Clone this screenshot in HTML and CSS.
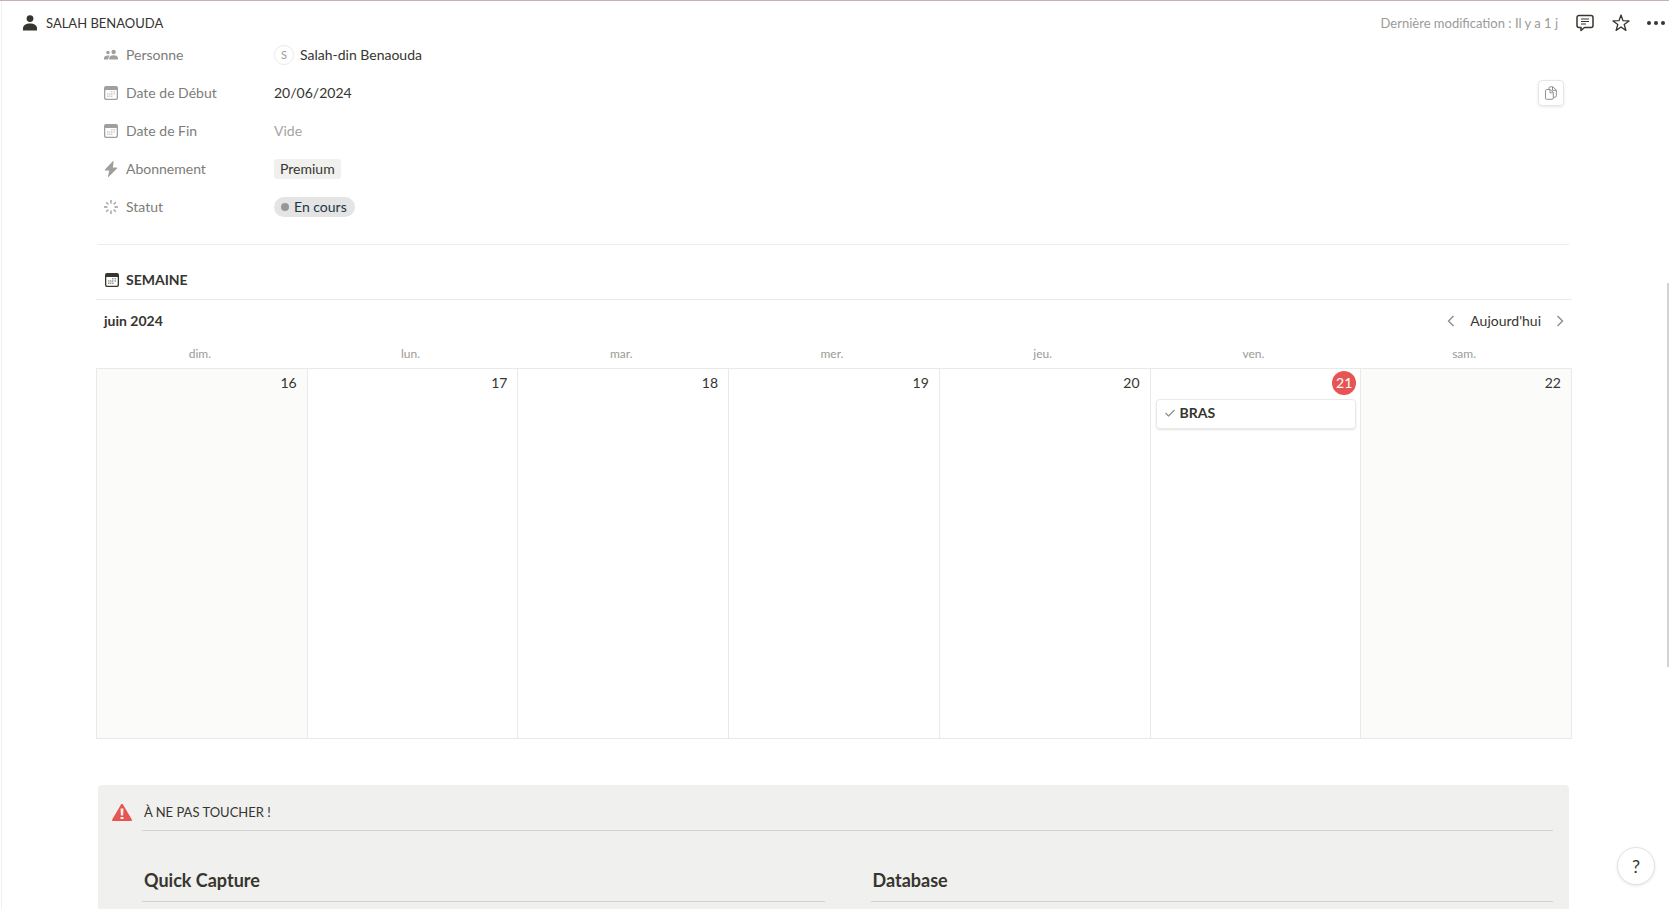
FILE: index.html
```
<!DOCTYPE html>
<html lang="fr">
  <head>
    <meta charset="utf-8" />
    <title>SALAH BENAOUDA</title>
    <link rel="stylesheet" href="styles.css">
  </head>
  <body>
    <!-- Shared icons -->
    <svg class="sprite" aria-hidden="true">
      <symbol id="icon-calendar" viewBox="0 0 14 14">
        <path fill-rule="evenodd" d="M2 0h10a2 2 0 0 1 2 2v10a2 2 0 0 1-2 2H2a2 2 0 0 1-2-2V2a2 2 0 0 1 2-2zM1.300 4v7.500a1.200 1.200 0 0 0 1.200 1.200h9a1.200 1.200 0 0 0 1.200-1.200V4z" />
        <path opacity=".5" d="M7 5h1.500v1.500H7zM9.500 5H11v1.500H9.500zM3 7.300h1.500v1.500H3zM5 7.300h1.500v1.500H5zM7 7.300h1.500v1.500H7zM9.500 7.300H11v1.500H9.500zM3 9.600h1.500v1.500H3zM5 9.600h1.500v1.500H5zM7 9.600h1.500v1.500H7z" />
      </symbol>
    </svg>

    <header class="topbar">
      <a href="#" class="page-title">
        <svg width="14" height="16" viewBox="0 0 14 16"><circle cx="7" cy="3.600" r="3.400" /><path d="M0 15.500v-2.200C0 10.500 3 8.500 7 8.500s7 2 7 4.800v2.200z" /></svg>
        SALAH BENAOUDA
      </a>
      <span class="edited">Dernière modification : Il y a 1 j</span>
      <button class="icon-button" aria-label="Commentaires">
        <svg width="18" height="18" viewBox="0 0 18 18" class="stroke"><path d="M3 1.500h12a2 2 0 0 1 2 2v8a2 2 0 0 1-2 2H8.500L5 16.500v-3H3a2 2 0 0 1-2-2v-8a2 2 0 0 1 2-2z" /><path d="M5 5h8M5 7.500h8M5 10h5" stroke-width="1" /></svg>
      </button>
      <button class="icon-button" aria-label="Favoris">
        <svg width="18" height="18" viewBox="0 0 18 18" class="stroke"><path stroke-width="1.300" d="M9 1l2 5.700 6 .2-4.800 3.600 1.700 5.900L9 13l-4.900 3.400 1.700-5.900L1 6.900l6-.2z" /></svg>
      </button>
      <button class="icon-button" aria-label="Plus">
        <svg width="18" height="18" viewBox="0 0 18 18"><circle cx="2" cy="9" r="2" /><circle cx="9" cy="9" r="2" /><circle cx="16" cy="9" r="2" /></svg>
      </button>
    </header>

    <main>
      <!-- Properties -->
      <dl class="properties">
        <div class="property">
          <dt><svg width="16" height="14" viewBox="0 0 16 14"><circle cx="4.500" cy="4" r="2" /><circle cx="11" cy="3.500" r="2.500" /><path d="M0 12V10.500C0 8.500 2 7.500 4.500 7.500c.8 0 1.500.1 2.100.4C5.500 8.800 5 9.800 5 11v1zM6 12v-1.500c0-2 2-3.300 5-3.300s5 1.300 5 3.300V12z" /></svg>Personne</dt>
          <dd><span class="avatar">S</span>Salah-din Benaouda</dd>
        </div>
        <div class="property">
          <dt><svg width="14" height="14"><use href="#icon-calendar" /></svg>Date de Début</dt>
          <dd>20/06/2024</dd>
          <button class="copy-button" aria-label="Copier">
            <svg width="12" height="14" viewBox="0 0 12 14" class="stroke"><path stroke-width="1" d="M4 3.500V2a1.200 1.200 0 0 1 1.200-1.200h2.600L11.300 4v6a1.200 1.200 0 0 1-1.200 1.200H8.500M7.500.8v3.500h3.800M1.700 3.500h3.600l3 3v5.600a1.200 1.200 0 0 1-1.200 1.200H1.700A1.200 1.200 0 0 1 .5 12.100V4.700a1.200 1.200 0 0 1 1.200-1.200zM5 3.800v3h3" /></svg>
          </button>
        </div>
        <div class="property">
          <dt><svg width="14" height="14"><use href="#icon-calendar" /></svg>Date de Fin</dt>
          <dd class="empty">Vide</dd>
        </div>
        <div class="property">
          <dt><svg width="14" height="16" viewBox="0 0 14 16"><path d="M8.500.5L1 8.500c-.5.600-.3 1 .4 1h3.800L4 15.500c-.1.600.4.700.8.300L13 7.500c.4-.5.200-1-.5-1H8.800l.8-5.300c.1-.8-.6-1.200-1.100-.7z" /></svg>Abonnement</dt>
          <dd><span class="tag">Premium</span></dd>
        </div>
        <div class="property">
          <dt><svg width="16" height="16" viewBox="0 0 16 16" class="stroke"><path stroke-width="1.600" d="M8 0v4M8 12v4M0 8h4M12 8h4M2.500 2.500l2.500 2.500M11 11l2.500 2.500M13.500 2.500L11 5M5 11l-2.500 2.500" /></svg>Statut</dt>
          <dd><span class="status">En cours</span></dd>
        </div>
      </dl>

      <!-- Week calendar -->
      <section class="calendar">
        <h2><svg width="14" height="14"><use href="#icon-calendar" /></svg>SEMAINE</h2>
        <div class="calendar-bar">
          <h3>juin 2024</h3>
          <button class="nav-button" aria-label="Semaine précédente"><svg width="8" height="12" viewBox="0 0 8 12" class="stroke"><path d="M6.500 1L1.500 6l5 5" /></svg></button>
          <button class="today-button">Aujourd'hui</button>
          <button class="nav-button" aria-label="Semaine suivante"><svg width="8" height="12" viewBox="0 0 8 12" class="stroke"><path d="M1.500 1l5 5-5 5" /></svg></button>
        </div>
        <table>
          <thead>
            <tr><th>dim.</th><th>lun.</th><th>mar.</th><th>mer.</th><th>jeu.</th><th>ven.</th><th>sam.</th></tr>
          </thead>
          <tbody>
            <tr>
              <td class="weekend"><span class="day">16</span></td>
              <td><span class="day">17</span></td>
              <td><span class="day">18</span></td>
              <td><span class="day">19</span></td>
              <td><span class="day">20</span></td>
              <td>
                <span class="day today">21</span>
                <a href="#" class="event"><svg width="10" height="8" viewBox="0 0 10 8" class="stroke"><path stroke-width="1.200" d="M.5 4L3.500 7l6-6" /></svg>BRAS</a>
              </td>
              <td class="weekend"><span class="day">22</span></td>
            </tr>
          </tbody>
        </table>
      </section>

      <!-- Callout -->
      <section class="callout">
        <svg class="warning" width="20" height="17" viewBox="0 0 20 17"><path fill="#e65553" d="M9 .6a1.200 1.200 0 0 1 2 0l8.800 15c.4.700 0 1.400-.9 1.400H1.100c-.9 0-1.300-.7-.9-1.400z" /><path fill="#f0f0ee" d="M8.500 4.500h3l-.4 7H8.900zM8.500 13h3v2h-3z" /></svg>
        <div class="callout-body">
          <p>À NE PAS TOUCHER !</p>
          <div class="columns">
            <h3>Quick Capture</h3>
            <h3>Database</h3>
          </div>
        </div>
      </section>
    </main>

    <button class="help">?</button>
    <div class="scroll-thumb"></div>
  </body>
</html>
```
FILE: styles.css
```
* {
  box-sizing: border-box;
}

body {
  margin: 0;
  padding-left: 1px;
  height: 100vh;
  overflow: hidden;
  border-top: 1px solid #c9b1b0;
  background: #fff;
  color: #37352f;
  font-family: Lato, "Liberation Sans", sans-serif;
  font-size: 14px;
  line-height: 20px;
}

h2,
h3,
p,
dl,
dd {
  margin: 0;
}

a {
  color: inherit;
  text-decoration: none;
}

button {
  display: flex;
  align-items: center;
  justify-content: center;
  padding: 0;
  border: none;
  background: none;
  color: inherit;
  font: inherit;
  cursor: pointer;
}

svg {
  flex: none;
  fill: currentColor;
}

.stroke {
  fill: none;
  stroke: currentColor;
  stroke-width: 1.500;
  stroke-linejoin: round;
}

.sprite {
  display: none;
}

.topbar {
  display: flex;
  align-items: center;
  height: 37px;
  padding: 7px 4px 0 21px;
  border-left: 1px solid #f0f0ef;
  font-size: 13px;
}

.page-title {
  display: flex;
  align-items: center;
  gap: 9px;
  margin-right: auto;
}

.edited {
  margin-right: 9px;
  color: #9b9a97;
}

.icon-button {
  width: 36px;
  height: 28px;
}

.icon-button:last-child {
  width: 26px;
  justify-content: flex-end;
}

main {
  min-height: 100%;
  padding: 0 97px 0 94px;
  border-left: 1px solid #f0f0ef;
}

.properties {
  display: flex;
  flex-direction: column;
  gap: 4px;
  padding: 0 5px 20px 6px;
  margin: 0 3px 0 2px;
  border-bottom: 1px solid #ececeb;
}

.property {
  display: flex;
  align-items: center;
  height: 34px;
}

.property dt {
  display: flex;
  align-items: center;
  gap: 8px;
  width: 170px;
  padding-bottom: 1px;
  color: #7d7c78;
}

.property dt svg {
  width: 14px;
  color: #a09f9c;
}

.property dd {
  display: flex;
  align-items: center;
  flex: 1;
}

.property .empty {
  color: #a5a4a1;
}

.avatar {
  width: 20px;
  height: 20px;
  margin-right: 6px;
  border: 1px solid #e9e9e8;
  border-radius: 50%;
  color: #9b9a97;
  font-size: 11px;
  line-height: 18px;
  text-align: center;
}

.copy-button {
  width: 26px;
  height: 26px;
  border: 1px solid #e6e6e5;
  border-radius: 4px;
  box-shadow: 0 1px 3px #0000001a;
  color: #91908c;
}

.tag {
  padding: 0 6px;
  border-radius: 3px;
  background: #f0f0ee;
}

.status {
  display: flex;
  align-items: center;
  gap: 5px;
  padding: 0 8px 0 7px;
  border-radius: 10px;
  background: #e3e4e3;
  color: #1c3448;
}

.status::before {
  content: "";
  width: 8px;
  height: 8px;
  border-radius: 50%;
  background: #979795;
}

.calendar h2 {
  display: flex;
  align-items: center;
  gap: 7px;
  height: 55px;
  padding: 16px 9px 0;
  border-bottom: 1px solid #e9e9e8;
  font-size: 14px;
}

.calendar-bar {
  display: flex;
  align-items: center;
  height: 42px;
  padding-left: 8px;
}

.calendar-bar h3 {
  margin-right: auto;
  font-size: 14px;
}

.nav-button {
  width: 24px;
  height: 24px;
  color: #91908c;
}

.today-button {
  padding: 0 7px;
}

.calendar table {
  width: 100%;
  table-layout: fixed;
  border-collapse: collapse;
}

.calendar th {
  height: 26px;
  padding: 0 4px 2px 0;
  color: #9b9a97;
  font-size: 12px;
  font-weight: normal;
}

.calendar td {
  height: 370px;
  padding: 2px 4px 0 5px;
  border: 1px solid #e9e9e8;
  vertical-align: top;
}

.calendar .weekend {
  background: #fbfbf9;
}

.day {
  display: block;
  padding-right: 6px;
  line-height: 24px;
  text-align: right;
}

.today {
  width: 24px;
  margin-left: auto;
  padding: 0;
  border-radius: 50%;
  background: #e65553;
  color: #fff;
  text-align: center;
}

.event {
  display: flex;
  align-items: center;
  gap: 5px;
  height: 30px;
  margin-top: 4px;
  padding: 0 8px 2px;
  border: 1px solid #e9e9e8;
  border-radius: 4px;
  box-shadow: 0 1px 2px #0000001f;
  font-weight: bold;
}

.event svg {
  color: #91908c;
}

.callout {
  display: flex;
  gap: 10px;
  margin: 46px 3px 0 2px;
  padding: 16px 16px 40px 14px;
  border-radius: 4px;
  background: #f0f0ee;
}

.warning {
  margin-top: 3px;
}

.callout-body {
  flex: 1;
}

.callout p {
  padding: 1px 2px 8px;
  border-bottom: 1px solid #d3d3d1;
  font-size: 13px;
}

.columns {
  display: grid;
  grid-template-columns: 1fr 1fr;
  gap: 46px;
  margin-top: 36px;
}

.columns h3 {
  padding: 0 2px 8px;
  border-bottom: 1px solid #d3d3d1;
  font-size: 18px;
  line-height: 26px;
}

.help {
  position: absolute;
  right: 14px;
  bottom: 24px;
  width: 38px;
  height: 38px;
  border: 1px solid #e3e3e2;
  border-radius: 50%;
  background: #fff;
  box-shadow: 0 1px 3px #0000001a;
  font-size: 18px;
}

.scroll-thumb {
  position: absolute;
  top: 283px;
  right: 0;
  width: 2px;
  height: 384px;
  background: #d3d3cd;
}
```
